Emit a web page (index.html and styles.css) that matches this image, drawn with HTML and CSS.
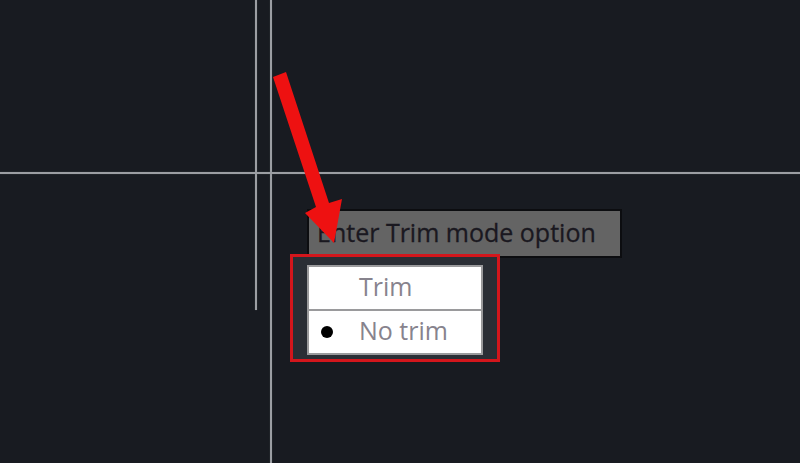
FILE: index.html
```html
<!DOCTYPE html>
<html>
<head>
<meta charset="utf-8">
<link rel="stylesheet" href="styles.css">
</head>
<body>
<div class="canvas">
  <div class="crosshair-v short"></div>
  <div class="crosshair-v long"></div>
  <div class="crosshair-h"></div>
  <div class="tooltip">Enter Trim mode option</div>
  <div class="highlight">
    <ul class="menu">
      <li class="menu-item"><span class="bullet-slot"></span><span class="label">Trim</span></li>
      <li class="menu-item"><span class="bullet-slot"><span class="bullet"></span></span><span class="label">No trim</span></li>
    </ul>
  </div>
  <svg class="arrow" width="800" height="463" viewBox="0 0 800 463">
    <polygon fill="#ee1111" points="273,77 286,72 329,203 342,199 334,243 305,213 316,207"/>
  </svg>
</div>
</body>
</html>
```
FILE: styles.css
```css
html, body {
  margin: 0;
  padding: 0;
  background: #181b21;
}
.canvas {
  position: relative;
  width: 800px;
  height: 463px;
  overflow: hidden;
  background: #181b21;
  font-family: "Open Sans", "Noto Sans", sans-serif;
}
.crosshair-v {
  position: absolute;
  width: 2px;
  background: #9b9ea3;
  box-shadow: 0 0 1px #6c6f74;
}
.crosshair-v.short { left: 255px; top: 0; height: 310px; }
.crosshair-v.long { left: 270px; top: 0; height: 463px; }
.crosshair-h {
  position: absolute;
  left: 0;
  top: 172px;
  width: 800px;
  height: 2px;
  background: #9b9ea3;
  box-shadow: 0 0 1px #6c6f74;
}
.tooltip {
  position: absolute;
  left: 307px;
  top: 209px;
  box-sizing: border-box;
  width: 315px;
  height: 49px;
  border: 2px solid #0c0d10;
  background: #646464;
  color: #1a1820;
  font-size: 25px;
  line-height: 42px;
  padding-left: 8px;
  white-space: nowrap;
  -webkit-text-stroke: 0.3px #1a1820;
}
.highlight {
  position: absolute;
  left: 290px;
  top: 254px;
  width: 210px;
  height: 108px;
  box-sizing: border-box;
  border: 3px solid #d3161c;
  background: #2a2e35;
  padding: 8px 0 0 14px;
}
.menu {
  list-style: none;
  margin: 0;
  padding: 0;
  width: 176px;
  box-sizing: border-box;
  border: 2px solid #9a9a9c;
  background: #ffffff;
}
.menu-item {
  display: flex;
  align-items: center;
  height: 42px;
  color: #87838d;
  font-size: 25px;
}
.menu-item + .menu-item {
  border-top: 2px solid #9a9a9c;
}
.bullet-slot {
  width: 50px;
  display: flex;
  justify-content: center;
  align-items: center;
}
.bullet {
  width: 12px;
  height: 12px;
  border-radius: 50%;
  background: #000;
  margin-left: -14px;
}
.label {
  line-height: 1;
  margin-top: -3px;
}
.arrow {
  position: absolute;
  left: 0;
  top: 0;
}
```
